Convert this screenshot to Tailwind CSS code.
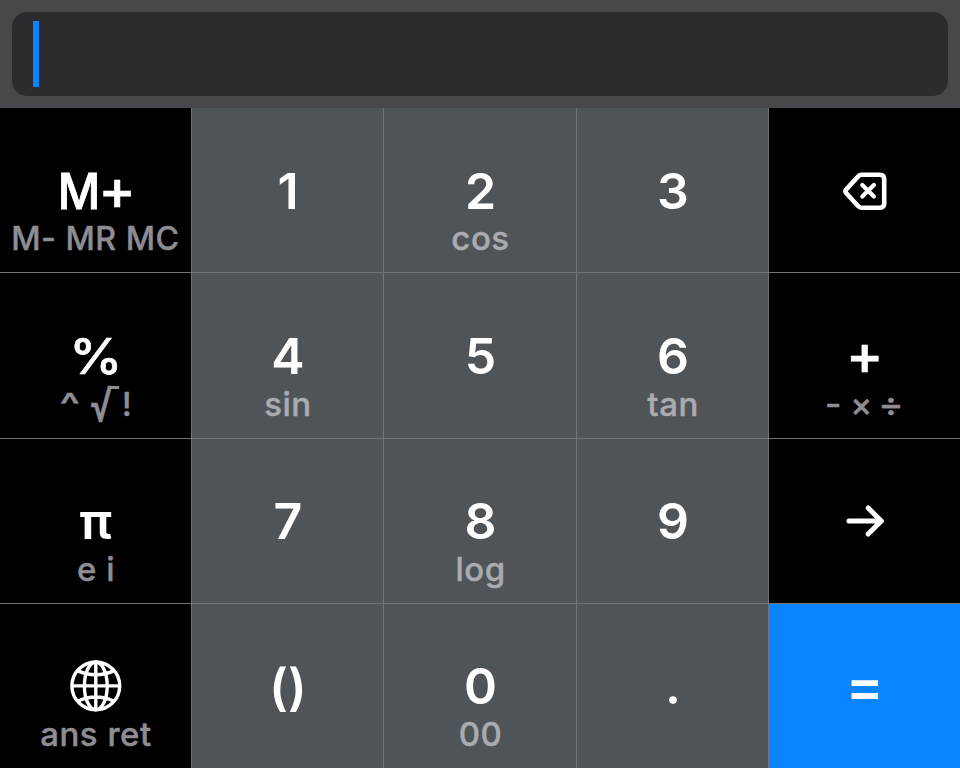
<!DOCTYPE html>
<html lang="en">
<head>
<meta charset="utf-8">
<title>Calculator</title>
<script src="https://cdn.jsdelivr.net/npm/@tailwindcss/browser@4"></script>
</head>
<body class="w-[960px] h-[768px] overflow-hidden bg-[#48474b] font-['Inter',sans-serif] text-white flex flex-col">
<header class="h-[108px] p-3 shrink-0">
  <div class="h-[84px] rounded-[15px] bg-[#2c2c2e] pl-[21px] pt-[9px]"><div class="w-[6px] h-[66px] bg-[#0a84ff]"></div></div>
</header>
<main class="grid grid-cols-[191px_191px_192px_191px_191px] grid-rows-[164px_165px_164px_164px] gap-px bg-[#727378] text-center text-[50px] leading-[60px] font-semibold whitespace-nowrap [&>div]:pt-[53px] [&>div]:pl-[1px] [&_p]:text-[33px] [&_p]:leading-[34px] [&_p]:font-medium [&_p]:[-webkit-text-stroke:0.4px] [&_p]:tracking-[0.5px] [&_svg]:mx-auto [&_span]:inline-block">
  <div class="bg-black"><span class="scale-x-[.93] origin-right font-medium [-webkit-text-stroke:0.9px] -translate-x-[1.5px]">M</span><span class="scale-[1.12] font-medium [-webkit-text-stroke:0.6px] -translate-x-[1.5px] -translate-y-px">+</span><p class="text-[#8e8d93]"><span class="scale-x-[.975] -translate-x-px">M- MR MC</span></p></div>
  <div class="bg-[#4f5458]">1</div>
  <div class="bg-[#4f5458]">2<p class="text-[#a9abb0]">cos</p></div>
  <div class="bg-[#4f5458]">3</div>
  <div class="bg-black"><svg class="w-[60px] h-[60px]" viewBox="0 0 60 60" fill="none" stroke="white" stroke-width="4.6" stroke-linecap="round" stroke-linejoin="round"><path d="M26.5 13.8H45Q49.2 13.8 49.2 18V42.5Q49.2 46.7 45 46.7H26.5Q24.6 46.7 23.3 45.3L11.3 32.2Q9.6 30.3 11.3 28.4L23.3 15.2Q24.6 13.8 26.5 13.8Z"/><path d="M27.3 23.9 38.9 35.5M38.9 23.9 27.3 35.5" stroke-width="4.2"/></svg></div>

  <div class="bg-black"><span class="scale-x-[1.07] font-medium [-webkit-text-stroke:0.6px]">%</span><p class="text-[#8e8d93] flex justify-center pt-px"><span class="scale-x-[1.3] -translate-x-[5px]">^</span><span class="relative w-[32px]"><span class="font-normal scale-x-[1.1] scale-y-[1.5] translate-x-[3px]">√</span><span class="absolute left-[26px] top-[-1px] w-[10px] h-[3px] bg-[#8e8d93]"></span></span><span class="translate-x-[7px]">!</span></p></div>
  <div class="bg-[#4f5458]">4<p class="text-[#a9abb0] pt-px">sin</p></div>
  <div class="bg-[#4f5458]">5</div>
  <div class="bg-[#4f5458]">6<p class="text-[#a9abb0] pt-px">tan</p></div>
  <div class="bg-black"><span class="scale-[1.12] -translate-y-px font-medium [-webkit-text-stroke:0.6px]">+</span><p class="text-[#8e8d93] pt-px flex justify-center"><span class="w-[23px] text-left scale-x-[1.1]">-</span><span class="w-[28px] -translate-x-px">×</span><span class="w-[28px] -translate-x-[2px] scale-x-[1.15] pl-1">÷</span></p></div>

  <div class="bg-black"><span class="-translate-y-px scale-x-[1.05]">π</span><p class="text-[#8e8d93]">e i</p></div>
  <div class="bg-[#4f5458]"><span class="-translate-y-px">7</span></div>
  <div class="bg-[#4f5458]"><span class="-translate-y-px">8</span><p class="text-[#a9abb0]">log</p></div>
  <div class="bg-[#4f5458]"><span class="-translate-y-px">9</span></div>
  <div class="bg-black"><svg class="w-[60px] h-[60px]" viewBox="0 0 60 60" fill="none" stroke="white" stroke-width="5" stroke-linecap="round" stroke-linejoin="round"><path d="M14 29H46.3M33.2 16 46.3 29 33.2 42"/></svg></div>

  <div class="bg-black"><svg class="w-[60px] h-[60px]" viewBox="0 0 60 60" fill="none" stroke="white" stroke-width="3.4"><circle cx="29.8" cy="28.9" r="23.9"/><ellipse cx="29.8" cy="28.9" rx="11.4" ry="23.9"/><path d="M29.8 4.9V52.9M5.8 28.9H53.8M11.5 13.6Q29.8 21.9 48.1 13.6M11.5 44.2Q29.8 35.9 48.1 44.2"/></svg><p class="text-[#8e8d93]">ans ret</p></div>
  <div class="bg-[#4f5458]">()</div>
  <div class="bg-[#4f5458]"><span class="-translate-y-px">0</span><p class="text-[#a9abb0]">00</p></div>
  <div class="bg-[#4f5458]"><span class="-translate-y-px">.</span></div>
  <div class="bg-[#0a84ff]"><span class="scale-x-[1.12] scale-y-[1.08] -translate-y-px">=</span></div>
</main>
</body>
</html>
